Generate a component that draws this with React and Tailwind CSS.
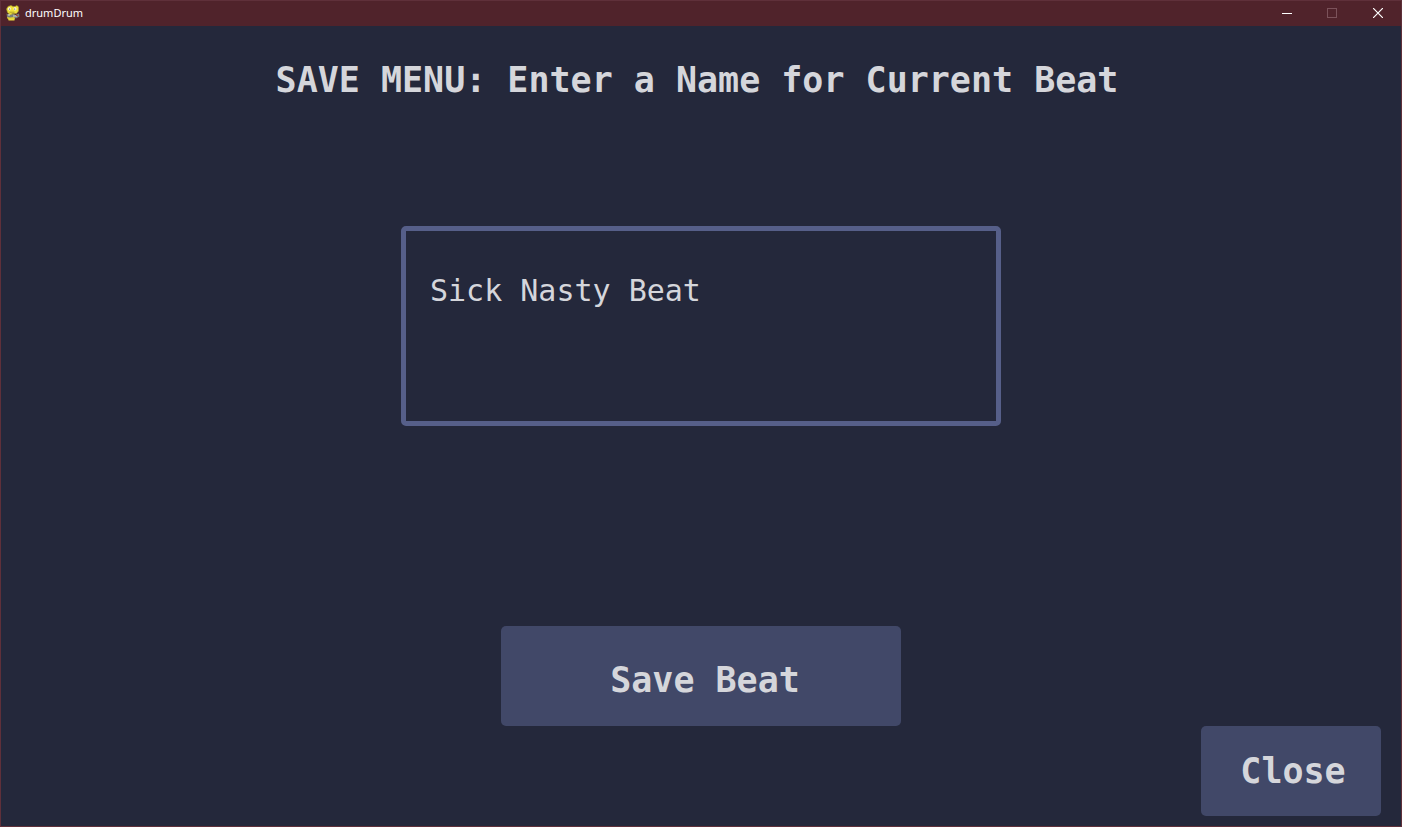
function SnakeIcon() {
  return (
    <svg viewBox="0 0 16 16" className="size-4 shrink-0" aria-hidden="true">
      <path d="M3 1.500 6 .5l2 1h2l2-1 1.500 1.500v4L11.500 8.500H8L5 9.500 2.500 7.500 1.500 4z" fill="#f0e23c" stroke="#a39a2a" strokeWidth=".6" />
      <path d="M3 9h6l2 2.500L9 15H4l-2-2z" fill="#d9cc35" />
      <path d="M1.500 8.500 5 10l3-1 2 1 4-1.500.5 3L11 13.500 8.500 12 5 12.500 2 12z" fill="#777c78" />
      <path d="M3 10h2M8 11h4" stroke="#d8d8d8" />
      <path d="M3.500 14.500h6" stroke="#e8dc3d" strokeWidth="2" />
      <ellipse cx="4.500" cy="3.800" rx="1.400" ry="1.600" fill="#fffef0" />
      <ellipse cx="10" cy="3.800" rx="1.400" ry="1.600" fill="#fffef0" />
      <circle cx="4.700" cy="4" r=".6" fill="#333" />
      <circle cx="9.800" cy="4" r=".6" fill="#333" />
      <path d="M4.500 7.200h5" stroke="#8f851f" strokeWidth=".7" />
      <path d="M11 10.500h2" stroke="#b44a35" />
    </svg>
  );
}

function TitleBar() {
  return (
    <header className="flex h-[25px] shrink-0 items-center bg-[#50232b] pb-px">
      <div className="flex flex-1 items-center gap-1 pl-1">
        <SnakeIcon />
        <span className="font-['Noto_Sans',sans-serif] text-[11px] leading-4 text-white">drumDrum</span>
      </div>
      <button type="button" aria-label="Minimize" className="flex h-full w-[45px] items-center justify-center">
        <svg viewBox="0 0 10 10" className="size-[10px]" shapeRendering="crispEdges">
          <path d="M0 5.500h10" stroke="#fff" />
        </svg>
      </button>
      <button type="button" aria-label="Maximize" disabled className="flex h-full w-[45px] items-center justify-center">
        <svg viewBox="0 0 10 10" className="size-[10px]" shapeRendering="crispEdges">
          <path d="M.5.5h9v9h-9z" fill="none" stroke="#7b525a" />
        </svg>
      </button>
      <button type="button" aria-label="Close window" className="flex h-full w-[47px] items-center justify-center">
        <svg viewBox="0 0 10 10" className="size-[10px]">
          <path d="m0 0 10 10M10 0 0 10" stroke="#fff" strokeWidth="1.200" />
        </svg>
      </button>
    </header>
  );
}

export default function App() {
  return (
    <div className="flex min-h-screen flex-col border border-[#5f303a] bg-[#24283b] font-['DejaVu_Sans_Mono',monospace] text-[#d5d6db]">
      <TitleBar />
      <main className="flex flex-1 flex-col items-center">
        <h1 className="mt-8 pr-2 text-center text-[35px] leading-11 font-bold">
          SAVE MENU: Enter a Name for Current Beat
        </h1>
        <textarea
          aria-label="Beat name"
          defaultValue="Sick Nasty Beat"
          spellCheck={false}
          className="mt-[124px] h-[200px] w-full max-w-[600px] resize-none rounded-[5px] border-5 border-[#565f89] bg-transparent px-6 py-10 text-[30px] leading-10 outline-none"
        />
        <button type="button" className="mt-[200px] h-[100px] w-full max-w-[400px] rounded-[5px] bg-[#414868] pt-2 pl-2 text-[35px] leading-11 font-bold">
          Save Beat
        </button>
        <button type="button" className="mr-5 mb-[10px] h-[90px] w-[180px] self-end rounded-[5px] bg-[#414868] pl-1 text-[35px] leading-11 font-bold">
          Close
        </button>
      </main>
    </div>
  );
}
